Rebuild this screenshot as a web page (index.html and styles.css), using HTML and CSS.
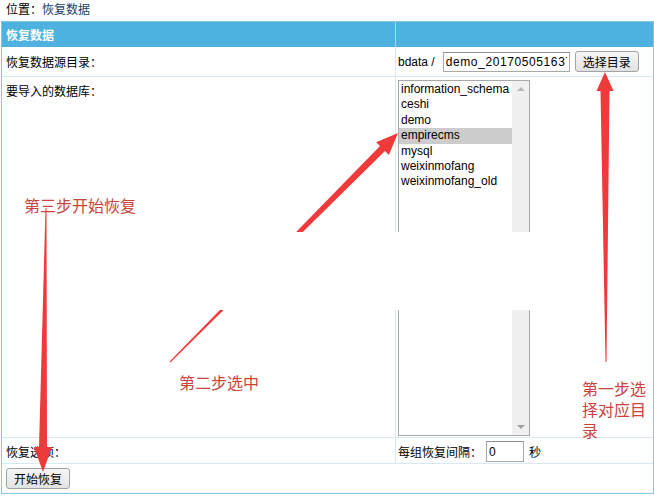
FILE: index.html
```html
<!DOCTYPE html>
<html lang="zh-CN">
<head>
    <meta charset="UTF-8">
    <title>恢复数据</title>
    <link rel="stylesheet" href="styles.css">
</head>
<body>
    <div class="location">位置：<a href="#" class="loc-link">恢复数据</a></div>

    <table class="form-table">
        <colgroup>
            <col class="col-label">
            <col class="col-value">
        </colgroup>
        <tr class="head">
            <td class="label">恢复数据</td>
            <td></td>
        </tr>
        <tr class="row-dir">
            <td class="label">恢复数据源目录：</td>
            <td class="value">
                <div class="line">
                    <span>bdata /</span>
                    <input type="text" class="txt txt-dir" value="demo_201705051637">
                    <button class="btn btn-dir">选择目录</button>
                </div>
            </td>
        </tr>
        <tr class="row-db">
            <td class="label top">要导入的数据库：</td>
            <td class="value top">
                <div class="listbox">
                    <ul class="options">
                        <li>information_schema</li>
                        <li>ceshi</li>
                        <li>demo</li>
                        <li class="sel">empirecms</li>
                        <li>mysql</li>
                        <li>weixinmofang</li>
                        <li>weixinmofang_old</li>
                    </ul>
                    <div class="scrollbar">
                        <span class="arr-up"></span>
                        <span class="arr-down"></span>
                    </div>
                </div>
            </td>
        </tr>
        <tr class="row-opt">
            <td class="label">恢复选项：</td>
            <td class="value">
                <div class="line">
                    <span>每组恢复间隔：</span>
                    <input type="text" class="txt txt-sec" value="0">
                    <span class="unit">秒</span>
                </div>
            </td>
        </tr>
        <tr class="row-submit">
            <td colspan="2" class="label"><button class="btn">开始恢复</button></td>
        </tr>
    </table>

    <!-- 标注层 -->
    <div class="annot">
        <svg class="marks" width="654" height="499" viewBox="0 0 654 499">
            <polygon class="arrow" points="398,133 388.9,155 385,151.1 170.4,362.4 169.6,361.6 380,146.1 376.1,142.2"/>
            <rect class="mask" x="3" y="232" width="555" height="78"/>
            <polygon class="arrow" points="605,72 613.5,91 609.5,91 606.5,362 605.5,362 600.5,91 596.5,91"/>
            <polygon class="arrow" points="43,472 34,447 39,447 45.5,208 46.5,208 47,447 52,447"/>
        </svg>
        <div class="note note-3">第三步开始恢复</div>
        <div class="note note-2">第二步选中</div>
        <div class="note note-1">第一步选择对应目录</div>
    </div>
</body>
</html>
```

FILE: styles.css
```css
body {
    margin: 0;
    position: relative;
    width: 654px;
    height: 499px;
    overflow: hidden;
    font-family: "Liberation Sans", "Noto Sans CJK SC", sans-serif;
    font-size: 12px;
    color: #000;
    background: #fff;
}

.location {
    height: 21px;
    line-height: 21px;
    padding-left: 6px;
}

.loc-link {
    color: #1b3d6b;
    text-decoration: none;
}

.form-table {
    box-sizing: border-box;
    margin-left: 1px;
    width: 653px;
    border: 1px solid #86c8e3;
    border-spacing: 0;
    table-layout: fixed;
}

.col-label { width: 394px; }
.col-value { width: 257px; }

.form-table td {
    padding: 0;
    border-bottom: 1px solid #d6eaf3;
    vertical-align: middle;
    white-space: nowrap;
}

.form-table td.label {
    padding-left: 4px;
    border-right: 1px solid #d6eaf3;
}

.form-table td.value {
    padding-left: 2px;
}

.form-table td.top {
    vertical-align: top;
}

.head { height: 25px; }

.head td {
    background: #4db2df;
    border-bottom: none;
    color: #fff;
    font-weight: bold;
}

.head td.label {
    border-right-color: #a3d9ef;
}

.row-dir { height: 30px; }
.row-db { height: 361px; }
.row-opt { height: 26px; }
.row-submit { height: 29px; }

.row-db td.label { padding-top: 5px; }
.row-db td.value { padding-top: 3px; }
.row-opt td { padding-top: 2px; }

.row-submit td,
.row-submit td.label {
    border-bottom: none;
    border-right: none;
}

.line {
    display: flex;
    align-items: center;
}

.txt {
    box-sizing: border-box;
    height: 20px;
    padding: 0 2px;
    border: 1px solid #a9a9a9;
    border-top-color: #8e8e8e;
    font-family: inherit;
    font-size: 12px;
    color: #000;
    outline: none;
}

.txt-dir {
    width: 127px;
    margin-left: 8px;
    letter-spacing: 0.6px;
}

.txt-sec {
    width: 38px;
    height: 21px;
    margin-left: 4px;
}

.unit {
    margin-left: 5px;
}

.btn {
    box-sizing: border-box;
    height: 21px;
    padding: 0 7px;
    border: 1px solid #a3a3a3;
    border-radius: 3px;
    background: linear-gradient(#f6f6f6, #e2e2e2);
    font-family: inherit;
    font-size: 12px;
    color: #000;
}

.btn-dir {
    margin-left: 5px;
}

.listbox {
    box-sizing: border-box;
    width: 132px;
    height: 356px;
    border: 1px solid #a8a8a8;
    display: flex;
}

.options {
    flex: 1;
    margin: 0;
    padding: 1px 0 0;
    list-style: none;
    overflow: hidden;
}

.options li {
    height: 15.4px;
    line-height: 15.4px;
    padding-left: 2px;
    white-space: nowrap;
    overflow: hidden;
}

.options li.sel {
    background: #cccccc;
}

.scrollbar {
    width: 17px;
    background: #f0f0f0;
    display: flex;
    flex-direction: column;
    justify-content: space-between;
    align-items: center;
    padding: 6px 0 6px;
}

.arr-up,
.arr-down {
    width: 0;
    height: 0;
    border-left: 4px solid transparent;
    border-right: 4px solid transparent;
}

.arr-up { border-bottom: 4px solid #b8b8b8; }
.arr-down { border-top: 4px solid #a0a0a0; }

.annot {
    position: absolute;
    left: 0;
    top: 0;
    width: 654px;
    height: 499px;
    pointer-events: none;
}

.marks {
    display: block;
}

.arrow { fill: #ee3a3a; }
.mask { fill: #fff; }

.note {
    position: absolute;
    font-family: "Noto Sans CJK SC", sans-serif;
    font-size: 16px;
    line-height: 20px;
    color: #c9433f;
}

.note-3 { left: 24px; top: 195px; }
.note-2 { left: 179px; top: 372px; }

.note-1 {
    left: 582px;
    top: 378px;
    width: 64px;
    line-height: 21px;
}
```
